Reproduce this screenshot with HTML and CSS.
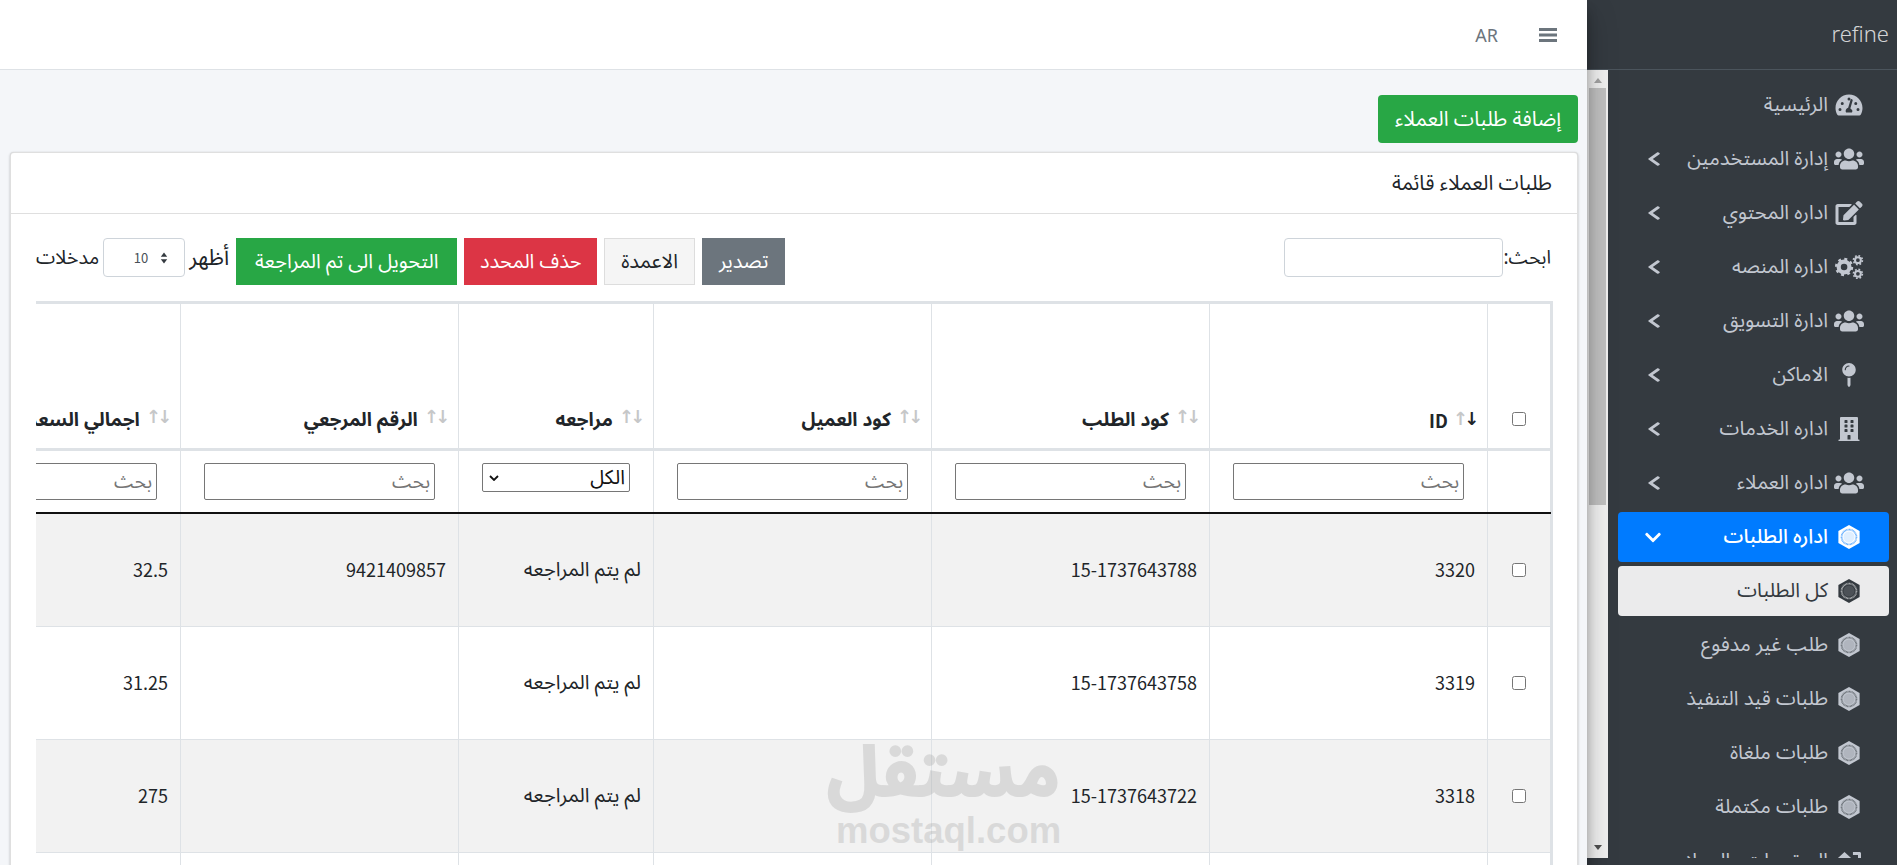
FILE: index.html
```html
<!DOCTYPE html>
<html lang="ar" dir="rtl">
<head>
    <meta charset="UTF-8">
    <title>طلبات العملاء</title>
    <link rel="stylesheet" href="styles.css">
</head>
<body>
    <svg class="sprites" width="0" height="0">
        <symbol id="i-users" viewBox="0 0 640 512"><path d="M96 224c35.3 0 64-28.7 64-64s-28.7-64-64-64-64 28.7-64 64 28.7 64 64 64zm448 0c35.3 0 64-28.7 64-64s-28.7-64-64-64-64 28.7-64 64 28.7 64 64 64zm32 32h-64c-17.6 0-33.5 7.1-45.1 18.6 40.3 22.1 68.9 62 75.1 109.4h66c17.7 0 32-14.3 32-32v-32c0-35.3-28.7-64-64-64zm-256 0c61.9 0 112-50.1 112-112S381.9 32 320 32 208 82.1 208 144s50.1 112 112 112zm76.8 32h-8.3c-20.8 10-43.9 16-68.5 16s-47.6-6-68.5-16h-8.3C179.6 288 128 339.6 128 403.2V432c0 26.5 21.5 48 48 48h288c26.5 0 48-21.5 48-48v-28.8c0-63.6-51.6-115.2-115.2-115.2zm-223.7-13.4C161.5 263.1 145.6 256 128 256H64c-35.3 0-64 28.7-64 64v32c0 17.7 14.3 32 32 32h65.9c6.3-47.4 34.9-87.3 75.2-109.4z"/></symbol>
        <symbol id="i-edit" viewBox="0 0 576 512"><path d="M402.6 83.2l90.2 90.2c3.8 3.8 3.8 10 0 13.8L274.4 405.6l-92.8 10.3c-12.4 1.4-22.9-9.1-21.5-21.5l10.3-92.8L388.8 83.2c3.8-3.8 10-3.8 13.8 0zm162-22.9l-48.8-48.8c-15.2-15.2-39.9-15.2-55.2 0l-35.4 35.4c-3.8 3.8-3.8 10 0 13.8l90.2 90.2c3.8 3.8 10 3.8 13.8 0l35.4-35.4c15.2-15.3 15.2-40 0-55.2zM384 346.2V448H64V128h229.8c3.2 0 6.2-1.3 8.5-3.5l40-40c7.6-7.6 2.2-20.5-8.5-20.5H48C21.5 64 0 85.5 0 112v352c0 26.5 21.5 48 48 48h352c26.5 0 48-21.5 48-48V306.2c0-10.7-12.9-16-20.5-8.5l-40 40c-2.2 2.3-3.5 5.3-3.5 8.5z"/></symbol>
        <symbol id="i-gauge" viewBox="0 0 576 512"><path fill-rule="evenodd" d="M288 32C129 32 0 161 0 320c0 53 14 102 39 145 6 9 16 15 27 15h444c11 0 21-6 27-15 25-43 39-92 39-145C576 161 447 32 288 32zM288 96a32 32 0 1 1 0 64 32 32 0 0 1 0-64zM96 384a32 32 0 1 1 0-64 32 32 0 0 1 0 64zm48-128a32 32 0 1 1 0-64 32 32 0 0 1 0 64zm206 160H226c-6-10-10-21-10-32 0-33 23-62 54-70l50-167c4-13 17-20 30-16s20 17 16 30l-50 167c23 14 44 34 44 56 0 11-4 22-10 32zm82-160a32 32 0 1 1 0-64 32 32 0 0 1 0 64zm48 128a32 32 0 1 1 0-64 32 32 0 0 1 0 64z"/></symbol>
        <symbol id="i-cogs" viewBox="0 0 640 512">
            <circle cx="215" cy="256" r="115" fill="none" stroke="currentColor" stroke-width="90"/>
            <circle cx="215" cy="256" r="170" fill="none" stroke="currentColor" stroke-width="50" stroke-dasharray="62 71.5"/>
            <circle cx="510" cy="110" r="62" fill="none" stroke="currentColor" stroke-width="44"/>
            <circle cx="510" cy="110" r="95" fill="none" stroke="currentColor" stroke-width="36" stroke-dasharray="37 37.6"/>
            <circle cx="510" cy="402" r="62" fill="none" stroke="currentColor" stroke-width="44"/>
            <circle cx="510" cy="402" r="95" fill="none" stroke="currentColor" stroke-width="36" stroke-dasharray="37 37.6"/>
        </symbol>
        <symbol id="i-pin" viewBox="0 0 288 512"><path fill-rule="evenodd" d="M112 316.900v156.700l22 33c4.700 7.100 15.200 7.100 19.900 0l22-33V316.900c-10.400 1.900-21 3.100-32 3.100s-21.600-1.200-32-3.100zM144 0C64.500 0 0 64.500 0 144s64.500 144 144 144 144-64.500 144-144S223.500 0 144 0zm0 76c-37.500 0-68 30.500-68 68 0 6.600-5.400 12-12 12s-12-5.400-12-12c0-50.700 41.300-92 92-92 6.600 0 12 5.400 12 12s-5.400 12-12 12z"/></symbol>
        <symbol id="i-building" viewBox="0 0 448 512"><path d="M436 480h-20V24c0-13.300-10.700-24-24-24H56C42.700 0 32 10.700 32 24v456H12c-6.600 0-12 5.400-12 12v20h448v-20c0-6.600-5.400-12-12-12zM128 76c0-6.600 5.400-12 12-12h40c6.600 0 12 5.400 12 12v40c0 6.600-5.400 12-12 12h-40c-6.600 0-12-5.400-12-12V76zm0 96c0-6.600 5.400-12 12-12h40c6.600 0 12 5.400 12 12v40c0 6.600-5.400 12-12 12h-40c-6.600 0-12-5.400-12-12v-40zm52 148h-40c-6.600 0-12-5.400-12-12v-40c0-6.600 5.400-12 12-12h40c6.600 0 12 5.400 12 12v40c0 6.600-5.400 12-12 12zm76 160h-64v-84c0-6.600 5.400-12 12-12h40c6.600 0 12 5.400 12 12v84zm64-172c0 6.600-5.400 12-12 12h-40c-6.600 0-12-5.400-12-12v-40c0-6.600 5.400-12 12-12h40c6.600 0 12 5.400 12 12v40zm0-96c0 6.600-5.400 12-12 12h-40c-6.600 0-12-5.400-12-12v-40c0-6.600 5.400-12 12-12h40c6.600 0 12 5.400 12 12v40zm0-96c0 6.600-5.400 12-12 12h-40c-6.600 0-12-5.400-12-12V76c0-6.600 5.400-12 12-12h40c6.600 0 12 5.400 12 12v40z"/></symbol>
        <symbol id="i-hex" viewBox="0 0 24 26">
            <path d="M12 0l11.500 6.500v13L12 26 .5 19.500v-13z"/>
            <circle class="hex-ring" cx="12" cy="13" r="8"/>
            <circle class="hex-core" cx="12" cy="13" r="6"/>
        </symbol>
        <symbol id="i-chev-left" viewBox="0 0 320 512" preserveAspectRatio="none"><path d="M34.520 239.030L228.870 44.690c9.370-9.370 24.570-9.370 33.940 0l22.670 22.670c9.360 9.360 9.370 24.520.04 33.900L131.490 256l154.020 154.750c9.340 9.380 9.320 24.540-.04 33.900l-22.670 22.670c-9.370 9.370-24.570 9.370-33.940 0L34.520 272.970c-9.370-9.370-9.370-24.570 0-33.940z"/></symbol>
        <symbol id="i-chev-down" viewBox="0 0 448 512"><path d="M207.029 381.476L12.686 187.132c-9.373-9.373-9.373-24.569 0-33.941l22.667-22.667c9.357-9.357 24.522-9.375 33.901-.04L224 284.505l154.745-154.021c9.379-9.335 24.544-9.317 33.901.04l22.667 22.667c9.373 9.373 9.373 24.569 0 33.941L240.971 381.476c-9.373 9.372-24.569 9.372-33.942 0z"/></symbol>
        <symbol id="i-level" viewBox="0 0 512 512"><path d="M160 64L20 190c-8 8-3 22 9 22h83v60c0 18 14 32 32 32h32c18 0 32-14 32-32v-60h83c12 0 17-14 9-22zM340 64h140c18 0 32 14 32 32v240h-64V128H340z"/></symbol>
    </svg>

    <aside class="sidebar">
        <div class="brand">refine</div>
        <div class="sidebar-body">
            <nav class="side-nav">
                <a class="nav-item"><svg class="ico"><use href="#i-gauge"/></svg><span class="nav-text">الرئيسية</span></a>
                <a class="nav-item"><svg class="ico"><use href="#i-users"/></svg><span class="nav-text">إدارة المستخدمين</span><svg class="chev"><use href="#i-chev-left"/></svg></a>
                <a class="nav-item"><svg class="ico"><use href="#i-edit"/></svg><span class="nav-text">اداره المحتوي</span><svg class="chev"><use href="#i-chev-left"/></svg></a>
                <a class="nav-item"><svg class="ico"><use href="#i-cogs"/></svg><span class="nav-text">اداره المنصه</span><svg class="chev"><use href="#i-chev-left"/></svg></a>
                <a class="nav-item"><svg class="ico"><use href="#i-users"/></svg><span class="nav-text">ادارة التسويق</span><svg class="chev"><use href="#i-chev-left"/></svg></a>
                <a class="nav-item"><svg class="ico"><use href="#i-pin"/></svg><span class="nav-text">الاماكن</span><svg class="chev"><use href="#i-chev-left"/></svg></a>
                <a class="nav-item"><svg class="ico"><use href="#i-building"/></svg><span class="nav-text">اداره الخدمات</span><svg class="chev"><use href="#i-chev-left"/></svg></a>
                <a class="nav-item"><svg class="ico"><use href="#i-users"/></svg><span class="nav-text">اداره العملاء</span><svg class="chev"><use href="#i-chev-left"/></svg></a>
                <a class="nav-item active"><svg class="ico"><use href="#i-hex"/></svg><span class="nav-text">اداره الطلبات</span><svg class="chev chev-down"><use href="#i-chev-down"/></svg></a>
                <a class="nav-item current"><svg class="ico"><use href="#i-hex"/></svg><span class="nav-text">كل الطلبات</span></a>
                <a class="nav-item"><svg class="ico"><use href="#i-hex"/></svg><span class="nav-text">طلب غير مدفوع</span></a>
                <a class="nav-item"><svg class="ico"><use href="#i-hex"/></svg><span class="nav-text">طلبات قيد التنفيذ</span></a>
                <a class="nav-item"><svg class="ico"><use href="#i-hex"/></svg><span class="nav-text">طلبات ملغاة</span></a>
                <a class="nav-item"><svg class="ico"><use href="#i-hex"/></svg><span class="nav-text">طلبات مكتملة</span></a>
                <a class="nav-item"><svg class="ico"><use href="#i-level"/></svg><span class="nav-text">المرتجعات والعملاء</span></a>
            </nav>
            <div class="fake-scroll">
                <span class="arrow-up"></span>
                <span class="thumb"></span>
                <span class="arrow-down"></span>
            </div>
        </div>
    </aside>

    <div class="wrapper">
        <header class="topbar">
            <svg class="bars" viewBox="0 0 18 16"><path d="M0 1h18v3H0zM0 6.500h18v3H0zM0 12h18v3H0z"/></svg>
            <span class="lang">AR</span>
        </header>

        <main class="content">
            <div class="page-actions">
                <button class="btn btn-green btn-add">إضافة طلبات العملاء</button>
            </div>

            <section class="card">
                <div class="card-header">طلبات العملاء قائمة</div>
                <div class="card-body">
                    <div class="toolbar">
                        <label class="search-box">ابحث:<input type="text" class="form-input"></label>
                        <div class="tools">
                            <button class="btn btn-grey">تصدير</button>
                            <button class="btn btn-light">الاعمدة</button>
                            <button class="btn btn-red">حذف المحدد</button>
                            <button class="btn btn-green">التحويل الى تم المراجعة</button>
                            <label class="page-size">
                                <span class="show-word">أظهر</span>
                                <span class="size-select"><svg viewBox="0 0 10 16"><path d="M5 1l4 5.500H1zM5 15l4-5.500H1z"/></svg>10</span>
                                <span class="entries-word">مدخلات</span>
                            </label>
                        </div>
                    </div>

                    <div class="table-wrap">
                        <table class="data-table">
                            <colgroup>
                                <col class="c-check"><col class="c-wide"><col class="c-wide"><col class="c-wide"><col class="c-review"><col class="c-wide"><col class="c-wide">
                            </colgroup>
                            <thead>
                                <tr class="head-row">
                                    <th><input type="checkbox" class="check"></th>
                                    <th class="num"><span class="sort"><i class="on">↓</i><i>↑</i></span>ID</th>
                                    <th><span class="sort"><i>↓</i><i>↑</i></span>كود الطلب</th>
                                    <th><span class="sort"><i>↓</i><i>↑</i></span>كود العميل</th>
                                    <th><span class="sort"><i>↓</i><i>↑</i></span>مراجعه</th>
                                    <th><span class="sort"><i>↓</i><i>↑</i></span>الرقم المرجعي</th>
                                    <th><span class="sort"><i>↓</i><i>↑</i></span>اجمالي السعر</th>
                                </tr>
                                <tr class="filter-row">
                                    <td></td>
                                    <td><input class="filter" placeholder="بحث"></td>
                                    <td><input class="filter" placeholder="بحث"></td>
                                    <td><input class="filter" placeholder="بحث"></td>
                                    <td><div class="filter-select">الكل<svg viewBox="0 0 10 6"><path d="M1 1l4 4 4-4" fill="none" stroke="currentColor" stroke-width="1.800"/></svg></div></td>
                                    <td><input class="filter" placeholder="بحث"></td>
                                    <td><input class="filter" placeholder="بحث"></td>
                                </tr>
                            </thead>
                            <tbody>
                                <tr class="odd">
                                    <td><input type="checkbox" class="check"></td><td class="num">3320</td><td class="num">15-1737643788</td><td></td><td>لم يتم المراجعه</td><td class="num">9421409857</td><td class="num">32.5</td>
                                </tr>
                                <tr>
                                    <td><input type="checkbox" class="check"></td><td class="num">3319</td><td class="num">15-1737643758</td><td></td><td>لم يتم المراجعه</td><td></td><td class="num">31.25</td>
                                </tr>
                                <tr class="odd">
                                    <td><input type="checkbox" class="check"></td><td class="num">3318</td><td class="num">15-1737643722</td><td></td><td>لم يتم المراجعه</td><td></td><td class="num">275</td>
                                </tr>
                                <tr>
                                    <td><input type="checkbox" class="check"></td><td class="num">3317</td><td class="num">15-1737643700</td><td></td><td>لم يتم المراجعه</td><td></td><td class="num">120</td>
                                </tr>
                            </tbody>
                        </table>
                    </div>
                </div>
            </section>
        </main>
    </div>

    <div class="watermark">
        <div class="wm-ar">مستقل</div>
        <div class="wm-en">mostaql.com</div>
    </div>
</body>
</html>
```

FILE: styles.css
```css
:root {
    --side-bg: #343a40;
    --side-text: #c2c7d0;
    --line: #dee2e6;
    --ar-font: "Noto Sans Arabic", "Noto Sans", "DejaVu Sans", sans-serif;
    --num-font: "Noto Sans CJK SC", "Noto Sans", sans-serif;
}
* { box-sizing: border-box; }
html, body { height: 100%; }
body {
    margin: 0;
    overflow: hidden;
    display: flex;
    font-family: var(--ar-font);
    font-size: 20px;
    color: #212529;
    background: #f4f6f9;
}
.sprites { position: absolute; }

/* sidebar */
.sidebar {
    width: 310px;
    height: 100%;
    flex: none;
    display: flex;
    flex-direction: column;
    background: var(--side-bg);
    padding-bottom: 7px;
}
.brand {
    height: 70px;
    flex: none;
    padding: 0 8px;
    display: flex;
    align-items: center;
    font-size: 22px;
    font-weight: 300;
    color: rgba(255,255,255,.8);
    border-bottom: 1px solid #4b545c;
}
.sidebar-body { flex: 1; min-height: 0; display: flex; }
.side-nav {
    flex: 1;
    min-width: 0;
    overflow: hidden;
    padding: 10px 8px 0 10px;
}
.nav-item {
    height: 50px;
    margin-bottom: 4px;
    display: flex;
    align-items: center;
    padding: 0 25px 0 0;
    border-radius: 4px;
    color: var(--side-text);
    font-size: 20px;
    --ring: #343a40;
}
.ico { width: 30px; height: 24px; flex: none; fill: currentColor; color: var(--side-text); }
.hex-ring { fill: none; stroke: var(--ring); stroke-width: 2; stroke-dasharray: 1 .5; opacity: .6; }
.hex-core { fill: var(--ring); opacity: .12; }
.nav-text { margin-right: 6px; white-space: nowrap; }
.chev { width: 14px; height: 16px; margin-right: auto; margin-left: 29px; fill: currentColor; flex: none; }
.chev-down { width: 16px; height: 19px; margin-left: 27px; }
.nav-item.active { background: #007bff; color: #fff; font-weight: 500; --ring: #007bff; }
.nav-item.active .ico { color: #fff; }
.nav-item.current { background: rgba(255,255,255,.9); color: #343a40; --ring: #fff; }
.nav-item.current .ico { color: #343a40; }
.fake-scroll {
    width: 21px;
    flex: none;
    background: #f1f1f1;
    display: flex;
    flex-direction: column;
    align-items: center;
    padding: 8px 0 8px;
}
.thumb { width: 17px; height: 417px; background: #c1c1c1; margin-top: 5px; }
.arrow-up, .arrow-down { width: 0; height: 0; border: 4px solid transparent; border-top: 0; border-bottom: 5px solid #a3a3a3; }
.arrow-down { border-bottom: 0; border-top: 5px solid #505050; margin-top: auto; }

/* main area */
.wrapper {
    flex: 1;
    min-width: 0;
    display: flex;
    flex-direction: column;
    box-shadow: 0 14px 28px rgba(0,0,0,.25), 0 10px 10px rgba(0,0,0,.22);
    z-index: 1;
}
.topbar {
    height: 70px;
    flex: none;
    display: flex;
    align-items: center;
    padding: 0 30px;
    gap: 41px;
    background: #fff;
    border-bottom: 1px solid var(--line);
}
.bars { width: 18px; height: 16px; fill: #6c757d; }
.lang { font-family: "Noto Sans", sans-serif; font-size: 18px; color: #6c757d; }
.content { flex: 1; min-height: 0; padding: 25px 9px 0 10px; }
.page-actions { margin-bottom: 9px; }
.btn {
    border: 1px solid transparent;
    font: inherit;
    color: #fff;
    padding: 0 16px;
    height: 47px;
    cursor: pointer;
}
.btn-green { background: #28a745; padding: 0 18px; }
.btn-add { height: 48px; border-radius: 4px; font-size: 20.500px; padding: 0 16px; }
.btn-red { background: #dc3545; padding: 0 14.500px; }
.btn-grey { background: #6c757d; }
.btn-light { background: #f5f5f5; color: #212529; border-color: #ddd; }

.card {
    background: #fff;
    border: 1px solid rgba(0,0,0,.125);
    border-radius: 4px;
    box-shadow: 0 0 1px rgba(0,0,0,.125), 0 1px 3px rgba(0,0,0,.2);
}
.card-header { height: 61px; padding: 0 25px; display: flex; align-items: center; font-size: 20.500px; border-bottom: 1px solid rgba(0,0,0,.125); }
.card-body { padding: 24px 24px 0 25px; }
.toolbar { display: flex; justify-content: space-between; align-items: flex-start; height: 63px; }
.search-box { display: flex; align-items: center; height: 39px; font-size: 19px; margin-right: 2px; }
.form-input { width: 219px; height: 39px; border: 1px solid #ced4da; border-radius: 4px; }
.tools { display: flex; gap: 7px; }
.page-size { display: flex; gap: 4px; height: 39px; align-items: center; }
.show-word { font-size: 22px; }
.entries-word { font-size: 19.500px; }
.size-select {
    width: 82px;
    height: 39px;
    border: 1px solid #ced4da;
    border-radius: 4px;
    display: flex;
    align-items: center;
    padding-right: 16px;
    gap: 12px;
    font: 13px var(--num-font);
    color: #495057;
}
.size-select svg { width: 8px; height: 14px; fill: #343a40; }

/* table */
.table-wrap { overflow: hidden; border-right: 2px solid var(--line); }
.data-table { border-collapse: collapse; table-layout: fixed; width: 1648px; }
.c-check { width: 63px; }
.c-wide { width: 278px; }
.c-review { width: 195px; }
.data-table th, .data-table td { border: 1px solid var(--line); padding: 12px; text-align: right; }
.data-table td.num { font-family: var(--num-font); font-size: 18px; padding-bottom: 14px; }
.data-table th.num { font-family: var(--num-font); font-size: 18px; }
.head-row th { height: 147px; vertical-align: bottom; border-top: 3px solid var(--line); border-bottom: 3px solid var(--line); padding-bottom: 8px; font-size: 19px; font-weight: 700; }
.head-row th.num { padding-bottom: 15px; }
.head-row th:first-child { padding-bottom: 10px; }
.sort { margin-left: 6px; font: 700 18px/1 "DejaVu Sans", sans-serif; position: relative; top: -3px; }
.head-row .num .sort { margin-left: 5px; }
.sort i { font-style: normal; opacity: .25; margin-right: -4px; }
.sort i.on { opacity: 1; }
.filter-row td { height: 62px; padding: 12px 23px; border-bottom: 2px solid #111; vertical-align: top; }
.filter { width: 100%; height: 37px; border: 1px solid #767676; border-radius: 2px; padding: 0 4px; font: 19px var(--ar-font); display: block; }
.filter-select {
    height: 29px;
    border: 1px solid #767676;
    border-radius: 2px;
    padding: 0 4px;
    display: flex;
    align-items: center;
    justify-content: space-between;
    font-size: 20px;
    line-height: 1;
    color: #111;
}
.filter-select svg { width: 10px; height: 6px; margin-left: 2px; }
.data-table tbody tr { height: 113px; }
.data-table tbody td { vertical-align: middle; }
.data-table tr.odd td { background: #f2f2f2; }
.data-table td:first-child, .data-table th:first-child { text-align: center; }
.check { width: 14px; height: 14px; margin: 0; vertical-align: middle; }

/* site watermark */
.watermark {
    position: absolute;
    left: 836px;
    top: 737px;
    width: 224px;
    text-align: center;
    color: #999;
    opacity: .27;
    pointer-events: none;
    z-index: 3;
}
.wm-ar { font-size: 70px; font-weight: 700; line-height: 74px; direction: rtl; padding-left: 8px; white-space: nowrap; -webkit-text-stroke: 2px #999; }
.wm-en { font: 700 36.500px/40px "Liberation Sans", sans-serif; direction: ltr; white-space: nowrap; }
```
